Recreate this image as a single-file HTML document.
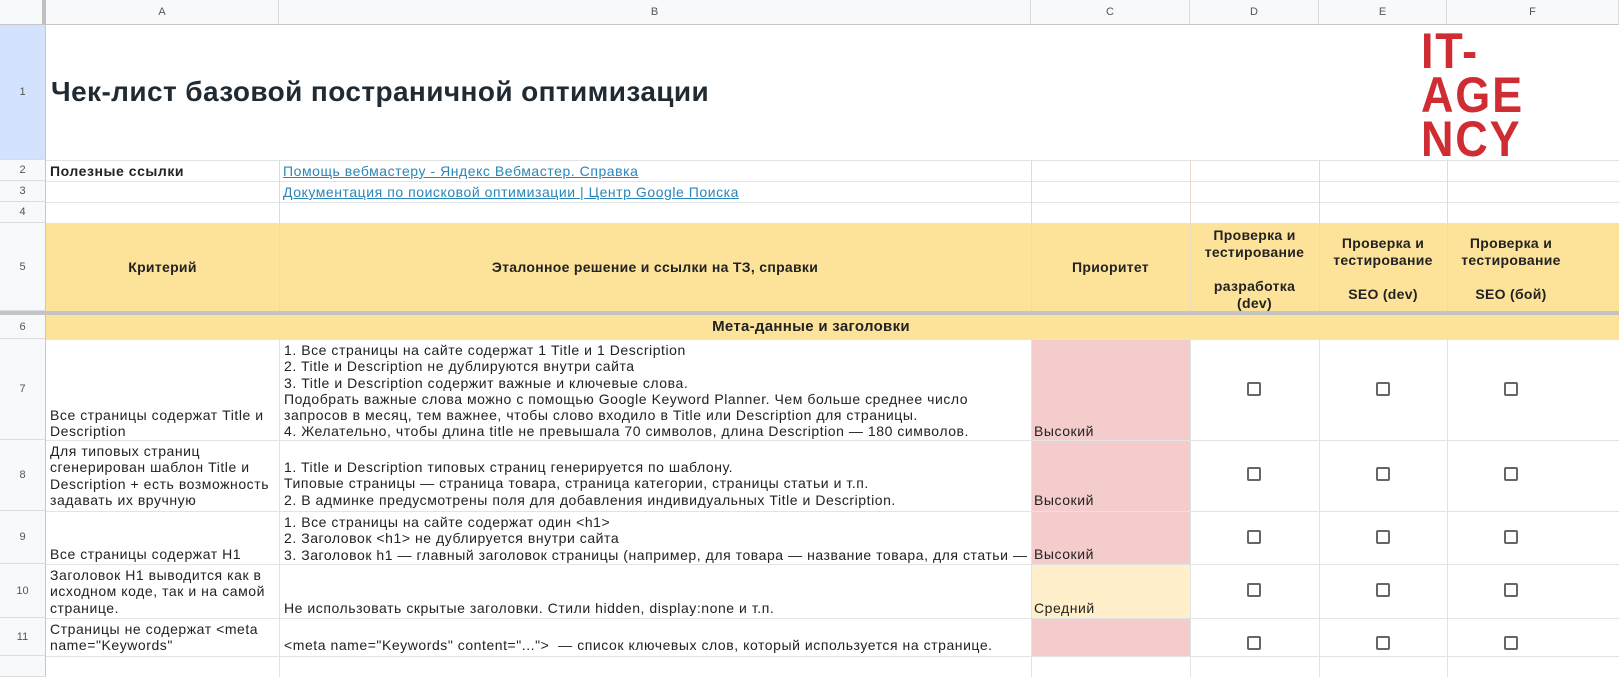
<!DOCTYPE html>
<html><head><meta charset="utf-8"><style>
*{margin:0;padding:0;box-sizing:border-box}
body{width:1619px;height:677px;overflow:hidden;background:#fff;font-family:"Liberation Sans","DejaVu Sans",sans-serif;color:#222;position:relative}
.a{position:absolute}
.hl{position:absolute;height:1px;background:#e2e3e3;left:0;width:1619px}
.vl{position:absolute;width:1px;background:#e2e3e3}
.col{position:absolute;top:0;height:25px;background:#f8f9fa;color:#555;font-size:11px;text-align:center;line-height:25px;border-right:1px solid #dadce0;border-bottom:1px solid #c7c7c7}
.rh{position:absolute;left:0;width:46px;background:#f8f9fa;color:#555;font-size:11px;text-align:center;border-right:1px solid #c7c7c7;border-bottom:1px solid #dadce0;display:flex;align-items:center;justify-content:center}
.t{position:absolute;font-size:14px;line-height:16.3px;white-space:nowrap;color:#222;letter-spacing:0.55px}
.cb{position:absolute;width:14px;height:14px;border:2px solid #666;border-radius:2px}
.hd{position:absolute;font-weight:bold;font-size:14px;line-height:17px;text-align:center;color:#222;letter-spacing:0.3px}
</style></head><body>
<div class="col" style="left:0;width:46px;border-right:4px solid #c0c0c0"></div>
<div class="col" style="left:46px;width:233px">A</div>
<div class="col" style="left:279px;width:752px">B</div>
<div class="col" style="left:1031px;width:159px">C</div>
<div class="col" style="left:1190px;width:129px">D</div>
<div class="col" style="left:1319px;width:128px">E</div>
<div class="col" style="left:1447px;width:172px">F</div>
<div class="rh" style="top:25px;height:135px;background:#d3e3fd">1</div>
<div class="rh" style="top:160px;height:21px">2</div>
<div class="rh" style="top:181px;height:21px">3</div>
<div class="rh" style="top:202px;height:21px">4</div>
<div class="rh" style="top:223px;height:88px">5</div>
<div class="rh" style="top:315px;height:24px">6</div>
<div class="rh" style="top:339px;height:101px">7</div>
<div class="rh" style="top:440px;height:71px">8</div>
<div class="rh" style="top:511px;height:53px">9</div>
<div class="rh" style="top:564px;height:54px">10</div>
<div class="rh" style="top:618px;height:38px">11</div>
<div class="rh" style="top:656px;height:21px"></div>
<div class="a" style="left:46px;top:223px;width:1573px;height:88px;background:#fde39a"></div>
<div class="a" style="left:0;top:311px;width:1619px;height:4px;background:#c4c4c4"></div>
<div class="a" style="left:46px;top:315px;width:1573px;height:24px;background:#fde39a"></div>
<div class="a" style="left:1031px;top:339px;width:159px;height:225px;background:#f4cccc"></div>
<div class="a" style="left:1031px;top:564px;width:159px;height:54px;background:#fff0cb"></div>
<div class="a" style="left:1031px;top:618px;width:159px;height:38px;background:#f4cccc"></div>
<div class="hl" style="top:160px;left:46px"></div>
<div class="hl" style="top:181px;left:46px"></div>
<div class="hl" style="top:202px;left:46px"></div>
<div class="hl" style="top:223px;left:46px"></div>
<div class="hl" style="top:339px;left:46px"></div>
<div class="hl" style="top:440px;left:46px"></div>
<div class="hl" style="top:511px;left:46px"></div>
<div class="hl" style="top:564px;left:46px"></div>
<div class="hl" style="top:618px;left:46px"></div>
<div class="hl" style="top:656px;left:46px"></div>
<div class="vl" style="left:279px;top:160px;height:151px;background:#e6dcc0"></div>
<div class="vl" style="left:1031px;top:160px;height:151px;background:#e6dcc0"></div>
<div class="vl" style="left:1190px;top:160px;height:151px;background:#e6dcc0"></div>
<div class="vl" style="left:1319px;top:160px;height:151px;background:#e6dcc0"></div>
<div class="vl" style="left:1447px;top:160px;height:151px;background:#e6dcc0"></div>
<div class="vl" style="left:279px;top:339px;height:338px"></div>
<div class="vl" style="left:1031px;top:339px;height:338px"></div>
<div class="vl" style="left:1190px;top:339px;height:338px"></div>
<div class="vl" style="left:1319px;top:339px;height:338px"></div>
<div class="vl" style="left:1447px;top:339px;height:338px"></div>
<div class="a" style="left:51px;top:76px;font-size:28px;font-weight:bold;color:#1f2a33;white-space:nowrap;letter-spacing:0.4px">Чек-лист базовой постраничной оптимизации</div>
<div class="a" style="left:1421px;top:29px;font-size:50px;line-height:44px;font-weight:bold;color:#cf2d34;transform:scaleX(0.9);transform-origin:left top;letter-spacing:2px">IT-<br>AGE<br>NCY</div>
<div class="t" style="left:50px;top:163px;font-weight:bold">Полезные ссылки</div>
<div class="t" style="left:283px;top:163px;color:#2a86b8;text-decoration:underline">Помощь вебмастеру - Яндекс Вебмастер. Справка</div>
<div class="t" style="left:283px;top:184px;color:#2a86b8;text-decoration:underline">Документация по поисковой оптимизации | Центр Google Поиска</div>
<div class="hd" style="left:46px;top:259px;width:233px">Критерий</div>
<div class="hd" style="left:279px;top:259px;width:752px">Эталонное решение и ссылки на ТЗ, справки</div>
<div class="hd" style="left:1031px;top:259px;width:159px">Приоритет</div>
<div class="hd" style="left:1190px;top:227px;width:129px">Проверка и<br>тестирование<br><br>разработка<br>(dev)</div>
<div class="hd" style="left:1319px;top:235px;width:128px">Проверка и<br>тестирование<br><br>SEO (dev)</div>
<div class="hd" style="left:1447px;top:235px;width:128px">Проверка и<br>тестирование<br><br>SEO (бой)</div>
<div class="hd" style="left:46px;top:318px;width:1530px;font-size:15px">Мета-данные и заголовки</div>
<div class="t" style="left:50px;top:407px">Все страницы содержат Title и<br>Description</div>
<div class="t" style="left:284px;top:342px">1. Все страницы на сайте содержат 1 Title и 1 Description<br>2. Title и Description не дублируются внутри сайта<br>3. Title и Description содержит важные и ключевые слова.<br>Подобрать важные слова можно с помощью Google Keyword Planner. Чем больше среднее число<br>запросов в месяц, тем важнее, чтобы слово входило в Title или Description для страницы.<br>4. Желательно, чтобы длина title не превышала 70 символов, длина Description — 180 символов.</div>
<div class="t" style="left:1034px;top:423px">Высокий</div>
<div class="t" style="left:50px;top:443px">Для типовых страниц<br>сгенерирован шаблон Title и<br>Description + есть возможность<br>задавать их вручную</div>
<div class="t" style="left:284px;top:459px">1. Title и Description типовых страниц генерируется по шаблону.<br>Типовые страницы — страница товара, страница категории, страницы статьи и т.п.<br>2. В админке предусмотрены поля для добавления индивидуальных Title и Description.</div>
<div class="t" style="left:1034px;top:492px">Высокий</div>
<div class="t" style="left:50px;top:546px">Все страницы содержат H1</div>
<div class="t" style="left:284px;top:514px;width:746px;overflow:hidden">1. Все страницы на сайте содержат один &lt;h1&gt;<br>2. Заголовок &lt;h1&gt; не дублируется внутри сайта<br>3. Заголовок h1 — главный заголовок страницы (например, для товара — название товара, для статьи —</div>
<div class="t" style="left:1034px;top:546px">Высокий</div>
<div class="t" style="left:50px;top:567px">Заголовок H1 выводится как в<br>исходном коде, так и на самой<br>странице.</div>
<div class="t" style="left:284px;top:600px">Не использовать скрытые заголовки. Стили hidden, display:none и т.п.</div>
<div class="t" style="left:1034px;top:600px">Средний</div>
<div class="t" style="left:50px;top:621px">Страницы не содержат &lt;meta<br>name="Keywords"</div>
<div class="t" style="left:284px;top:637px">&lt;meta name="Keywords" content="..."&gt;&nbsp; — список ключевых слов, который используется на странице.</div>
<div class="cb" style="left:1247px;top:382px"></div><div class="cb" style="left:1376px;top:382px"></div><div class="cb" style="left:1504px;top:382px"></div>
<div class="cb" style="left:1247px;top:467px"></div><div class="cb" style="left:1376px;top:467px"></div><div class="cb" style="left:1504px;top:467px"></div>
<div class="cb" style="left:1247px;top:530px"></div><div class="cb" style="left:1376px;top:530px"></div><div class="cb" style="left:1504px;top:530px"></div>
<div class="cb" style="left:1247px;top:583px"></div><div class="cb" style="left:1376px;top:583px"></div><div class="cb" style="left:1504px;top:583px"></div>
<div class="cb" style="left:1247px;top:636px"></div><div class="cb" style="left:1376px;top:636px"></div><div class="cb" style="left:1504px;top:636px"></div>
</body></html>
